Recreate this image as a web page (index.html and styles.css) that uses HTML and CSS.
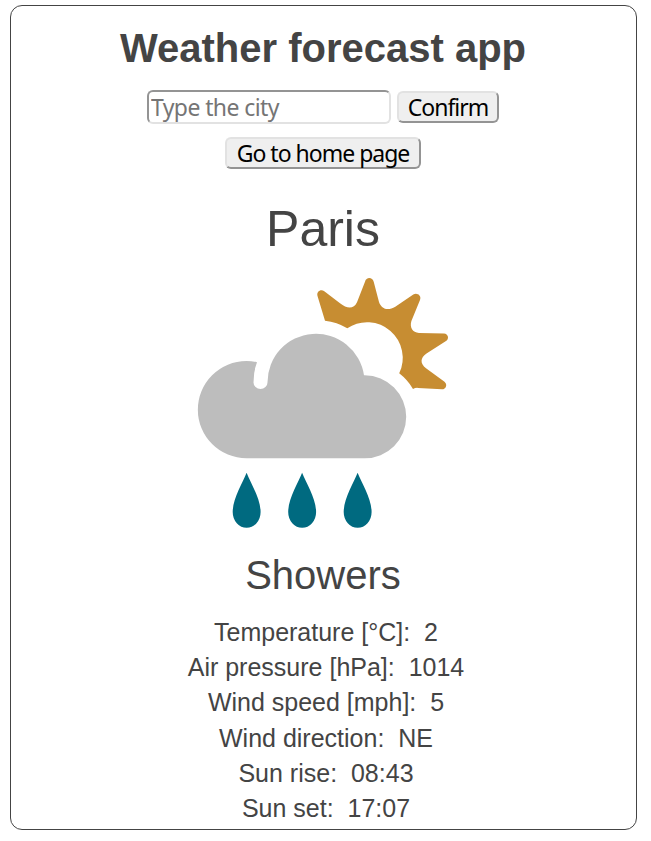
FILE: index.html
```html
<!DOCTYPE html>
<html lang="en">
<head>
<meta charset="utf-8">
<title>Weather forecast app</title>
<link rel="stylesheet" href="styles.css">
</head>
<body>
<main class="card">
  <h1 class="title">Weather forecast app</h1>
  <form class="search">
    <input class="city-input" type="text" placeholder="Type the city">
    <button class="button confirm" type="button">Confirm</button>
  </form>
  <button class="button home" type="button">Go to home page</button>
  <h2 class="city">Paris</h2>
  <svg class="icon" viewBox="190 270 266 266" aria-hidden="true">
    <path fill="#c78d32" d="M325 320.7L317.5 296C316.3 291.5 320.8 288.8 324.3 291.3L340 303.3C347 308.8 353.5 309.6 357 302.3L365 281.7C366.2 276.8 372.4 276.8 373.7 281.7L379 302C381.5 309.3 388 311.2 395.3 306.7L413.3 294.6C417.2 292.2 421.8 296 420 300L411.4 321C409.5 327.5 412.5 332.5 419 333L444 333.4C448.3 333.6 449.5 338.8 446 341L426.5 353.5C420 358 420 363.5 426 368.3L444.5 381.7C447.8 384.5 446 389.3 442 389.3L418 387.9Q415.3 387.7 413 388.9Q407.5 379.7 399.2 373.3A35.6 35.6 0 0 0 347.3 328.3Q337 321.9 325 320.7Z"/>
    <path fill="#bdbdbd" d="M246.5 361A48.65 48.65 0 0 0 246.5 458.3H364.7A41.5 41.5 0 0 0 364.700 375.300H364A48.500 48.500 0 0 0 267.500 382.500A7 6.500 0 0 1 253.500 382.500Q253.500 371 257 362.200Q252 361 246.500 361Z"/>
    <g fill="#006a80">
      <path id="drop" d="M246.6 472.8C250.5 483 260.6 498.500 260.600 512A13.950 15.800 0 0 1 232.700 512C232.700 498.500 242.700 483 246.600 472.800Z"/>
      <use href="#drop" x="55.500"/>
      <use href="#drop" x="111"/>
    </g>
  </svg>
  <h3 class="condition">Showers</h3>
  <div class="details">
    <div>Temperature [°C]:&nbsp; 2</div>
    <div>Air pressure [hPa]:&nbsp; 1014</div>
    <div>Wind speed [mph]:&nbsp; 5</div>
    <div>Wind direction:&nbsp; NE</div>
    <div>Sun rise:&nbsp; 08:43</div>
    <div>Sun set:&nbsp; 17:07</div>
  </div>
</main>
</body>
</html>
```
FILE: styles.css
```css
* { box-sizing: border-box; }
body {
  margin: 5px 14px 0 10px;
  background: #fff;
  color: #444;
  font-family: "Liberation Sans", Arial, sans-serif;
}
.card {
  display: flex;
  flex-direction: column;
  align-items: center;
  height: 825px;
  padding-right: 1px;
  border: 1px solid #444;
  border-radius: 12px;
}
h1, h2, h3 { margin: 0; white-space: nowrap; }
.title {
  margin-top: 19px;
  font-size: 40px;
  line-height: 46px;
}
.search {
  display: flex;
  align-items: center;
  gap: 6px;
  margin-top: 19px;
}
.city-input, .button {
  font-family: "Noto Sans", sans-serif;
  font-size: 23px;
  line-height: 28px;
  border-radius: 6px;
  white-space: nowrap;
}
.city-input {
  width: 244px;
  height: 34px;
  padding: 1px 2px;
  letter-spacing: -0.6px;
  background: #fff;
  border: 2px solid;
  border-color: #949494 #e2e2e2 #e2e2e2 #949494;
}
.city-input::placeholder { color: #757575; }
.button {
  height: 32px;
  padding: 0;
  letter-spacing: -1px;
  background: #efefef;
  color: #000;
  border: 2px solid;
  border-color: #e2e2e2 #949494 #949494 #e2e2e2;
}
.confirm { width: 102px; }
.home { width: 196px; margin-top: 13px; }
.city {
  margin-top: 31px;
  font-size: 50px;
  font-weight: 400;
  line-height: 58px;
}
.icon {
  display: block;
  width: 266px;
  height: 266px;
  margin-top: 12px;
}
.condition {
  margin-top: 16px;
  font-size: 40px;
  font-weight: 400;
  line-height: 46px;
}
.details {
  margin-top: 17px;
  padding-left: 6px;
  font-size: 25px;
  line-height: 35.200px;
  text-align: center;
}
```
